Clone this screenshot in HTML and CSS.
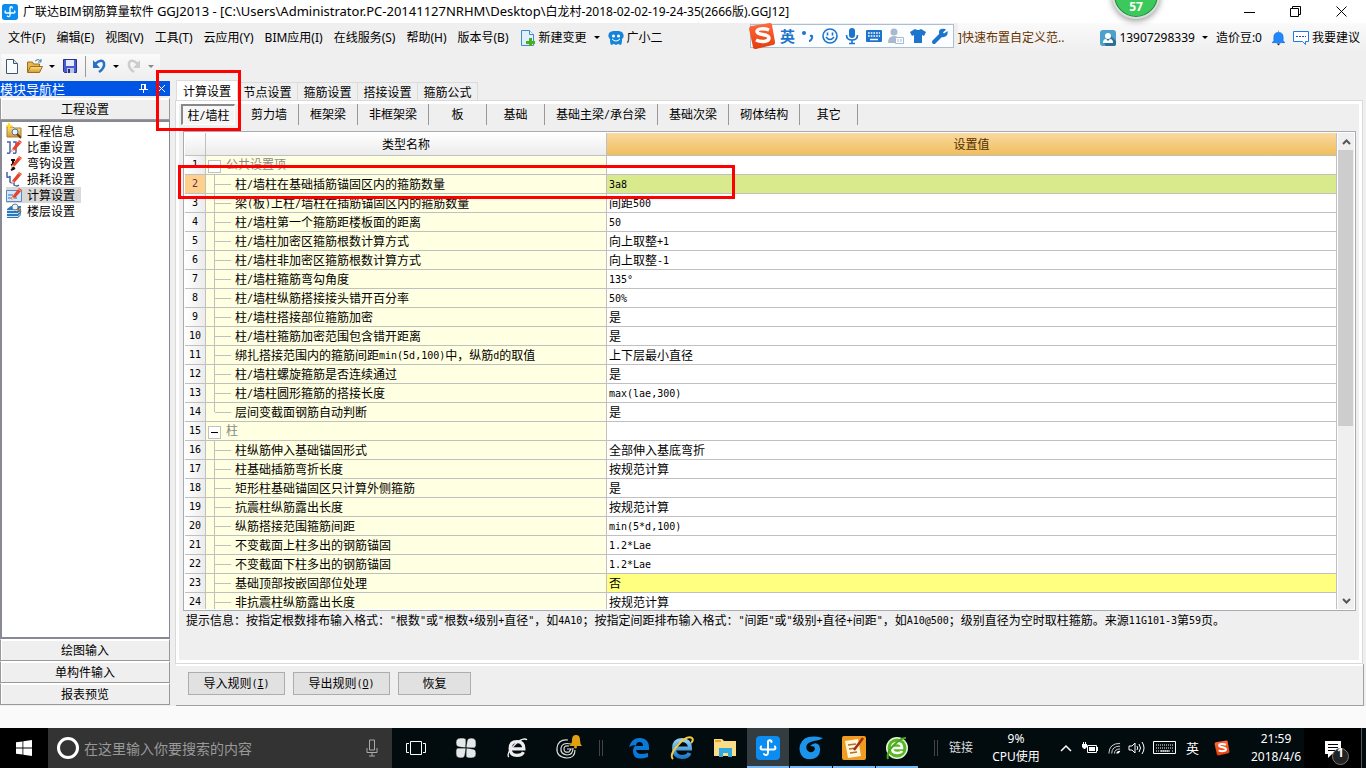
FILE: index.html
```html
<!DOCTYPE html>
<html lang="zh-CN">
<head>
<meta charset="utf-8">
<title>广联达BIM钢筋算量软件 GGJ2013</title>
<link rel="stylesheet" href="styles.css">
</head>
<body>
<svg class="defs" aria-hidden="true">
  <defs>
    <linearGradient id="gold" x1="0" y1="0" x2="0" y2="1"><stop offset="0" stop-color="#fbe08a"/><stop offset="1" stop-color="#d9982a"/></linearGradient>
    <linearGradient id="ora" x1="0" y1="0" x2="0" y2="1"><stop offset="0" stop-color="#ff6a3c"/><stop offset="1" stop-color="#e63c0a"/></linearGradient>
    <linearGradient id="sky" x1="0" y1="0" x2="0" y2="1"><stop offset="0" stop-color="#8fd0f8"/><stop offset="1" stop-color="#1f78c8"/></linearGradient>
    <symbol id="ggj" viewBox="0 0 24 24"><rect width="24" height="24" rx="4" fill="#0a8cf0"/><path d="M15.500 6c0-2.500-3.500-2.500-3.500 0v10.500c0 3-3 3-4 1.500M5 10.500c-1 2.500 0 3 1.500 3h11c1.500 0 2.500-.5 1.500-3" fill="none" stroke="#fff" stroke-width="2" stroke-linecap="round"/></symbol>
    <symbol id="pencil" viewBox="0 0 16 16"><path d="M6 10 13 1l3 2-7 8-4 2z" fill="#e8402a"/><path d="m5 13 1-3 3 1z" fill="#f3cfa0"/><path d="m12 2 3 2" stroke="#ff9a80"/></symbol>
    <symbol id="sogou" viewBox="0 0 28 28"><path d="M3 4 22 1q2 0 2 2l3 17q0 3-2 3L8 27q-3 0-3-2L1 7q0-2 2-3z" fill="url(#ora)"/><path d="M21 8c-5-2-12-1.500-12 1.500 0 4 12 2 12 6.500 0 4-8 4.500-13 2" fill="none" stroke="#fff" stroke-width="3.500"/></symbol>
  </defs>
</svg>

<header class="titlebar">
  <svg class="logo" viewBox="0 0 24 24"><use href="#ggj"/></svg>
  <h1>广联达BIM钢筋算量软件 <span class="path">GGJ2013 - [C:\Users\Administrator.PC-20141127NRHM\Desktop\</span>白龙村-2018-02-02-19-24-35(2666版).GGJ12]</h1>
  <div class="winbtns">
    <button aria-label="最小化"><svg viewBox="0 0 11 11"><path d="M0 6.500h11" stroke="#000"/></svg></button>
    <button aria-label="还原"><svg viewBox="0 0 11 11"><path d="M.5 2.500h8v8h-8zM2.500 2V.5h8v8H9" fill="none" stroke="#000"/></svg></button>
    <button aria-label="关闭"><svg viewBox="0 0 11 11"><path d="m.5.5 10 10m0-10-10 10" stroke="#000"/></svg></button>
  </div>
</header>

<nav class="menubar">
  <div class="menus">
    <button>文件(F)</button><button>编辑(E)</button><button>视图(V)</button><button>工具(T)</button><button>云应用(Y)</button><button>BIM应用(I)</button><button>在线服务(S)</button><button>帮助(H)</button><button>版本号(B)</button>
  </div>
  <button class="iconbtn"><svg class="i16" viewBox="0 0 16 16"><path d="M1.500.5h8l4 4v11h-12z" fill="#dff0fc" stroke="#3c8cc8"/><path d="M9.500.5v4h4" fill="#fff" stroke="#3c8cc8"/><path d="M9 8h3v3h3v3h-3v2H9v-2H6v-3h3z" fill="#48b020"/></svg>新建变更<i class="caret"></i></button>
  <button class="iconbtn mascot"><svg class="i16" viewBox="0 0 16 16"><path d="M2 2l3-1h6l3 1c2 2 2 5 1 6l-1 1c0 2 0 4-1 6l-3-1-2 1-2-1-3 1c-1-2-1-4-1-6L1 8C0 6 0 4 2 2z" fill="#1684d8"/><circle cx="5.500" cy="6" r="1.500" fill="#fff"/><circle cx="10.500" cy="6" r="1.500" fill="#fff"/><path d="M4 9q4 4 8 0" fill="none" stroke="#fff"/></svg>广小二</button>
  <div class="account">
    <a href="#" class="tip">]快速布置自定义范..</a>
    <button class="iconbtn user"><svg class="i16" viewBox="0 0 16 16"><rect width="16" height="16" rx="3" fill="#4ca0cc"/><path d="m10 5 6 6v3q0 2-2 2H6l-2-3z" fill="#2c7098"/><circle cx="8" cy="6" r="3" fill="#fff"/><path d="M3 13q0-4 3-4l2 2 2-2q3 0 3 4z" fill="#fff"/></svg>13907298339<i class="caret"></i></button>
    <span class="beans">造价豆:0</span>
    <svg class="bell" viewBox="0 0 14 16"><path d="M7 0v2M2 11V7q0-5 5-5t5 5v4l2 2H0z" fill="#1e88ff" stroke="#1060c0" stroke-width=".6"/><path d="M5 14h4l-2 2z" fill="#222"/></svg>
    <button class="iconbtn"><svg class="i16" viewBox="0 0 16 16"><path d="M.5 1.500h15v10h-3v3l-3-3h-9z" fill="#fff" stroke="#1e78e8"/><path d="M3 6.500h10" stroke="#1e50a8" stroke-dasharray="2 1"/></svg>我要建议</button>
  </div>
  <div class="ime">
    <svg class="imelogo" viewBox="0 0 28 28"><use href="#sogou"/></svg>
    <b>英</b>
    <svg viewBox="0 0 18 18"><circle cx="5" cy="6" r="2" fill="#1c74cc"/><path d="M11 9q3-1 2 2t-3 3" fill="none" stroke="#1c74cc" stroke-width="2"/></svg>
    <svg viewBox="0 0 18 18"><circle cx="9" cy="9" r="7" fill="none" stroke="#1c74cc" stroke-width="1.600"/><path d="M6.500 5.500v3m5-3v3M5 10q4 5 8 0" fill="none" stroke="#1c74cc" stroke-width="1.600"/></svg>
    <svg viewBox="0 0 18 18"><rect x="6" y="1" width="6" height="10" rx="3" fill="#1c74cc"/><path d="M3.500 8q0 5 5.500 5t5.500-5M9 13v3m-3 .5h6" fill="none" stroke="#1c74cc" stroke-width="1.600"/></svg>
    <svg viewBox="0 0 18 18"><rect x="1" y="3" width="16" height="12" rx="1" fill="#1c74cc"/><path d="M3 6h12M3 9h12" stroke="#fff" stroke-width="1.500" stroke-dasharray="1.700 1"/><path d="M5 12.500h8" stroke="#fff" stroke-width="1.500"/></svg>
    <svg viewBox="0 0 18 18"><circle cx="7" cy="5" r="3.500" fill="#a9b9cf"/><path d="M1 16q0-7 6-7 3 0 4 2v5z" fill="#a9b9cf"/><path d="M8.500 10.500h8v6h-8zM11 12v3m3-3v3" fill="#fff" stroke="#a9b9cf"/></svg>
    <svg viewBox="0 0 18 18"><path d="M6 2q3 2 6 0l5 3-2 4-2-1v8H5V8L3 9 1 5z" fill="#1c74cc"/></svg>
    <svg viewBox="0 0 18 18"><path d="m3 15 7-7" stroke="#1c74cc" stroke-width="4" stroke-linecap="round"/><path d="M15 2.500l-3 3 1 1 3.500-2.500q1 5-3.500 6T8 6t6-4z" fill="#1c74cc"/></svg>
  </div>
  <div class="speed">57</div>
</nav>

<div class="toolbar">
  <div class="tools">
    <button aria-label="新建"><svg class="i16" viewBox="0 0 16 16"><path d="M2.500 1.500h7l4 4v10h-11z" fill="#f8fcff" stroke="#40566e"/><path d="M9.500 1.500v4h4" fill="#cddff0" stroke="#40566e"/></svg></button>
    <button aria-label="打开"><svg class="i16" viewBox="0 0 16 16"><path d="M.5 14V4h5l1 2h6v8z" fill="#e8b84c" stroke="#9a7020"/><path d="m.5 14.500 3-6h12l-3 6z" fill="url(#gold)" stroke="#9a7020"/><path d="M8 3q3-3 6 0m0-2v3h-3" fill="none" stroke="#4878a8"/></svg><i class="caret"></i></button>
    <button aria-label="保存"><svg class="i16" viewBox="0 0 16 16"><path d="M1.500 1.500h13v13h-12l-1-1z" fill="#4a5cd0" stroke="#28348c"/><path d="M4 2h8v6H4z" fill="#e4ecff"/><path d="M5 10h7v5H5z" fill="#b8c4e8"/><path d="M6 11h2v4H6z" fill="#283060"/></svg></button>
    <button class="undo" aria-label="撤销"><svg class="i16" viewBox="0 0 16 16"><path d="M4 6Q11 0 13 5q1 5-5 9" fill="none" stroke="#2870c8" stroke-width="2.500"/><path d="M2 2v8h7z" fill="#2870c8"/></svg><i class="caret"></i></button>
    <button aria-label="重做" disabled><svg class="i16" viewBox="0 0 16 16"><path d="M12 6Q5 0 3 5q-1 5 5 9" fill="none" stroke="#ccc" stroke-width="2.500"/><path d="M14 2v8H7z" fill="#ccc"/></svg><i class="caret off"></i></button>
  </div>
</div>

<div class="workspace">
  <aside class="sidebar">
    <div class="sidehead"><h2>模块导航栏</h2>
      <button aria-label="固定"><svg viewBox="0 0 9 9"><path d="M2.500 0v5M6.500 0v5M2 .5h5M0 5.500h9M4.500 6v3M5.500 0v5" stroke="#fff"/></svg></button>
      <button aria-label="关闭"><svg viewBox="0 0 9 9"><path d="m1 1 7 7m0-7-7 7" stroke="#fff"/></svg></button>
    </div>
    <button class="cat">工程设置</button>
    <ul class="list">
      <li><svg class="i16" viewBox="0 0 16 16"><path d="M1 4h6l1 1h7v9H1z" fill="url(#gold)" stroke="#a08040"/><path d="M3 0v6M0 3h6" stroke="#ffdc30" stroke-width="2"/><circle cx="9" cy="9" r="3" fill="#e6f4ff" stroke="#5070a0"/><path d="m11 11 4 4" stroke="#604020" stroke-width="2"/></svg>工程信息</li>
      <li><svg class="i16" viewBox="0 0 16 16"><path d="M1 3h3v10q0 2-3 1M7 3h3v10q0 2-3 1" fill="none" stroke="#4464a8" stroke-width="1.500"/><use href="#pencil"/></svg>比重设置</li>
      <li><svg class="i16" viewBox="0 0 16 16"><path d="M5 5h4M7 5v10M5 10l4-1M5 15l4-2" stroke="#111" stroke-width="2"/><use href="#pencil"/></svg>弯钩设置</li>
      <li><svg class="i16" viewBox="0 0 16 16"><path d="M1 1v5q2 1 3-1v6q2 2 4-1v4q3 2 5 0" fill="none" stroke="#4464a8" stroke-width="1.500"/><use href="#pencil"/></svg>损耗设置</li>
      <li class="on"><svg class="i16" viewBox="0 0 16 16"><path d="M.5 3.500h15v11H.5z" fill="#d4e6fa" stroke="#5888c0"/><path d="M2 8h5M2 11h9" stroke="#4070b0"/><use href="#pencil"/></svg>计算设置</li>
      <li><svg class="i16" viewBox="0 0 16 16"><path d="m1 6 4-3h10v9l-3 3H1z" fill="#2c78b8"/><path d="M1 7.500h11l3-3M1 10.500h11l3-3M1 13.500h11l3-3" fill="none" stroke="#c8e8ff"/><circle cx="9" cy="4" r="3" fill="#e6f4ff" stroke="#708090"/><path d="m11 6 4 3" stroke="#b07030" stroke-width="2"/></svg>楼层设置</li>
    </ul>
    <button class="cat">绘图输入</button>
    <button class="cat">单构件输入</button>
    <button class="cat">报表预览</button>
    <div class="mark mark-tab"></div>
  </aside>

  <main class="main">
    <div class="tabs">
      <button class="on">计算设置</button><button>节点设置</button><button>箍筋设置</button><button>搭接设置</button><button>箍筋公式</button>
    </div>
    <section class="panel">
      <div class="subtabs">
        <button class="on">柱<span class="m">/</span>墙柱</button><button>剪力墙</button><button>框架梁</button><button>非框架梁</button><button>板</button><button>基础</button><button>基础主梁<span class="m">/</span>承台梁</button><button>基础次梁</button><button>砌体结构</button><button>其它</button>
      </div>
      <div class="gridbox">
        <div class="gridview">
          <table class="grid">
            <colgroup><col class="c-no"><col class="c-name"><col></colgroup>
            <thead><tr><th></th><th>类型名称</th><th class="cur">设置值</th></tr></thead>
            <tbody>
              <tr class="group"><th>1</th><td><i class="box"></i>公共设置项</td><td></td></tr>
              <tr class="sel"><th>2</th><td>柱<span class="m">/</span>墙柱在基础插筋锚固区内的箍筋数量</td><td><span class="m">3a8</span></td></tr>
              <tr><th>3</th><td>梁<span class="m">(</span>板<span class="m">)</span>上柱<span class="m">/</span>墙柱在插筋锚固区内的箍筋数量</td><td>间距<span class="m">500</span></td></tr>
              <tr><th>4</th><td>柱<span class="m">/</span>墙柱第一个箍筋距楼板面的距离</td><td><span class="m">50</span></td></tr>
              <tr><th>5</th><td>柱<span class="m">/</span>墙柱加密区箍筋根数计算方式</td><td>向上取整<span class="m">+1</span></td></tr>
              <tr><th>6</th><td>柱<span class="m">/</span>墙柱非加密区箍筋根数计算方式</td><td>向上取整<span class="m">-1</span></td></tr>
              <tr><th>7</th><td>柱<span class="m">/</span>墙柱箍筋弯勾角度</td><td><span class="m">135°</span></td></tr>
              <tr><th>8</th><td>柱<span class="m">/</span>墙柱纵筋搭接接头错开百分率</td><td><span class="m">50%</span></td></tr>
              <tr><th>9</th><td>柱<span class="m">/</span>墙柱搭接部位箍筋加密</td><td>是</td></tr>
              <tr><th>10</th><td>柱<span class="m">/</span>墙柱箍筋加密范围包含错开距离</td><td>是</td></tr>
              <tr><th>11</th><td>绑扎搭接范围内的箍筋间距<span class="m">min(5d,100)</span>中，纵筋<span class="m">d</span>的取值</td><td>上下层最小直径</td></tr>
              <tr><th>12</th><td>柱<span class="m">/</span>墙柱螺旋箍筋是否连续通过</td><td>是</td></tr>
              <tr><th>13</th><td>柱<span class="m">/</span>墙柱圆形箍筋的搭接长度</td><td><span class="m">max(lae,300)</span></td></tr>
              <tr class="last"><th>14</th><td>层间变截面钢筋自动判断</td><td>是</td></tr>
              <tr class="group"><th>15</th><td><i class="box minus"></i>柱</td><td></td></tr>
              <tr><th>16</th><td>柱纵筋伸入基础锚固形式</td><td>全部伸入基底弯折</td></tr>
              <tr><th>17</th><td>柱基础插筋弯折长度</td><td>按规范计算</td></tr>
              <tr><th>18</th><td>矩形柱基础锚固区只计算外侧箍筋</td><td>是</td></tr>
              <tr><th>19</th><td>抗震柱纵筋露出长度</td><td>按规范计算</td></tr>
              <tr><th>20</th><td>纵筋搭接范围箍筋间距</td><td><span class="m">min(5*d,100)</span></td></tr>
              <tr><th>21</th><td>不变截面上柱多出的钢筋锚固</td><td><span class="m">1.2*Lae</span></td></tr>
              <tr><th>22</th><td>不变截面下柱多出的钢筋锚固</td><td><span class="m">1.2*Lae</span></td></tr>
              <tr class="changed"><th>23</th><td>基础顶部按嵌固部位处理</td><td>否</td></tr>
              <tr><th>24</th><td>非抗震柱纵筋露出长度</td><td>按规范计算</td></tr>
            </tbody>
          </table>
        </div>
        <div class="scroll">
          <button aria-label="向上滚动"><svg viewBox="0 0 9 6"><path d="m1 5 3.500-3.500L8 5" fill="none" stroke="#555" stroke-width="2"/></svg></button>
          <div class="thumb"></div>
          <button aria-label="向下滚动"><svg viewBox="0 0 9 6"><path d="m1 1 3.500 3.500L8 1" fill="none" stroke="#555" stroke-width="2"/></svg></button>
        </div>
        <div class="mark mark-row"></div>
      </div>
      <p class="hint">提示信息：按指定根数排布输入格式：<span class="m">"</span>根数<span class="m">"</span>或<span class="m">"</span>根数<span class="m">+</span>级别<span class="m">+</span>直径<span class="m">"</span>，如<span class="m">4A10</span>；按指定间距排布输入格式：<span class="m">"</span>间距<span class="m">"</span>或<span class="m">"</span>级别<span class="m">+</span>直径<span class="m">+</span>间距<span class="m">"</span>，如<span class="m">A10@500</span>；级别直径为空时取柱箍筋。来源<span class="m">11G101-3</span>第<span class="m">59</span>页。</p>
    </section>
    <div class="actions">
      <button>导入规则<span class="m">(<u>I</u>)</span></button><button>导出规则<span class="m">(<u>O</u>)</span></button><button class="short">恢复</button>
    </div>
  </main>
</div>

<footer class="taskbar">
  <button class="start" aria-label="开始"><svg viewBox="0 0 16 16"><path d="M0 2.300 6.500 1.400v6.100H0zM7.300 1.300 16 0v7.500H7.300zM0 8.400h6.500v6.200L0 13.700zM7.300 8.400H16V16l-8.700-1.300z" fill="#fff"/></svg></button>
  <label class="search">
    <i class="ring"></i>
    <input type="text" placeholder="在这里输入你要搜索的内容" aria-label="搜索">
    <svg class="mic" viewBox="0 0 12 18"><path d="M3.500 1h5v10h-5zM1 9v4.500h10V9M6 13.500V17M3 17h6" fill="none" stroke="#aaa"/></svg>
  </label>
  <button class="tv" aria-label="任务视图"><svg viewBox="0 0 20 16"><path d="M4.500 1.500h11v13h-11zM3 3.500H.5v9H3M17 3.500h2.500v9H17" fill="none" stroke="#fff"/></svg></button>
  <button class="app wide" aria-label="应用中心"><svg viewBox="0 0 24 24"><g fill="#e4e8e8" stroke="#020b0e" stroke-width=".8"><path d="M12 12V3q0-2-3-2H6Q1 1 1 6t4 5q4 1 7 1z"/><path d="M12 12h9q2 0 2-3V6q0-5-5-5t-5 4q-1 4-1 7z"/><path d="M12 12v9q0 2 3 2h3q5 0 5-5t-4-5q-4-1-7-1z"/><path d="M12 12H3q-2 0-2 3v3q0 5 5 5t5-4q1-4 1-7z"/></g></svg></button>
  <button class="app wide" aria-label="浏览器"><svg viewBox="0 0 24 24"><path d="M6 13h13.500q0-8-7.500-8t-7.500 7.500T12 20q5.500 0 7-3.500" fill="none" stroke="#eee" stroke-width="3.500"/><path d="M3 22Q0 18 9 9T23 3" fill="none" stroke="#eee" stroke-width="1.500"/></svg></button>
  <button class="app wide" aria-label="广联达消息"><svg viewBox="0 0 28 28"><path d="M14 6Q4 5 3 14t10 10q8 0 8-8M17 10q-9-2-10 4t6 7q6 0 6-7M15 12q-5-1-5 3t5 3l2-3h-4" fill="none" stroke="#ddd" stroke-width="1.200"/><path d="M15 12q3-2 3-6 0-5 4-5t4 5q0 4 2 6z" fill="#e0a010"/><circle cx="21.500" cy="13" r="1.500" fill="#e0a010"/></svg></button>
  <i class="sep"></i>
  <div class="apps">
    <button class="app" aria-label="Edge"><svg viewBox="0 0 24 24"><path d="M2 11Q5 1 14 2q9 1 8 12H9q1 6 12 3v4Q6 26 6 15q0-4 3-6-4 0-7 2zm7-1h7q0-4-3.500-4T9 10z" fill="#0a78d8"/></svg></button>
    <button class="app" aria-label="Internet Explorer"><svg viewBox="0 0 24 24"><path d="M6 12.500h14q0-8.500-8-8.500t-8 8.500T12 21q6 0 7.500-4" fill="none" stroke="url(#sky)" stroke-width="4"/><path d="M3 23Q-1 19 8 9T22 2q2 2-1 5" fill="none" stroke="#f8cc38" stroke-width="2"/></svg></button>
    <button class="app" aria-label="文件资源管理器"><svg viewBox="0 0 24 24"><path d="M1 3h8l2 2h12v15H1z" fill="#f8dc88"/><path d="M2 4h6v2H2z" fill="#e8a820"/><path d="M6 12h13v9h-4v-4h-5v4H6z" fill="#30a8e0"/></svg></button>
    <button class="app open active" aria-label="GGJ2013"><svg viewBox="0 0 24 24"><use href="#ggj"/></svg></button>
    <button class="app open" aria-label="广联达"><svg viewBox="0 0 24 24"><path d="M24 2Q5-3 1 9q-2 8 4 13 7 3 13-1 5-5 2-12-4-4-9 1 7 0 4 5-4 3-7-1-3-7 7-9 5 0 9-3z" fill="#1c94ec"/></svg></button>
    <button class="app open" aria-label="记事"><svg viewBox="0 0 24 24"><rect width="24" height="24" rx="2" fill="#f09c20"/><path d="m3 5 13-2 3 17-13 2z" fill="#fff6dc"/><path d="m6 9 8-1m-7 5 7-1m-6 5 7-1" stroke="#b07030" stroke-width="1.500"/><path d="m12 14 9-12" stroke="#a03010" stroke-width="2.500"/></svg></button>
    <button class="app open" aria-label="360浏览器"><svg viewBox="0 0 24 24"><circle cx="12" cy="12" r="11" fill="#e8f8e0"/><circle cx="12" cy="12" r="9.500" fill="#58b828"/><path d="M7 12h10q0-5-5-5t-5 5 5 5q4 0 5-2" fill="none" stroke="#fff" stroke-width="2.500"/><path d="M3 23Q1 17 9 9t12-7" fill="none" stroke="#48a818" stroke-width="2"/></svg></button>
  </div>
  <i class="sep right"></i>
  <span class="links">链接</span>
  <div class="twolines cpu"><span>9%</span><span>CPU使用</span></div>
  <div class="tray">
    <svg class="t-up" viewBox="0 0 12 8"><path d="m1 7 5-5 5 5" fill="none" stroke="#fff" stroke-width="1.500"/></svg>
    <svg class="t-bat" viewBox="0 0 16 12"><path d="M5.500 3.500h9v7h-9z" fill="none" stroke="#fff"/><path d="M7 5h6v4H7zM15 5h1v4h-1zM0 2h5v3L3 7H2L0 5zM1 0h1v2H1zM3 0h1v2H3z" fill="#fff"/></svg>
    <svg class="t-wifi" viewBox="0 0 14 14"><path d="M1 13Q1 2 13 2M4 13q0-8 9-8M7 13q0-5 6-5" fill="none" stroke="#ddd"/><path d="M9 13q0-3 4-3v1l-2 2z" fill="#fff"/></svg>
    <svg class="t-vol" viewBox="0 0 17 14"><path d="M1 5h3l3-3v10L4 9H1zM9 5q1.500 2 0 4M11 3q3 4 0 8M14 1q4 6 0 12" fill="none" stroke="#fff"/></svg>
    <svg class="t-kb" viewBox="0 0 24 14"><path d="M.5.500h22v12H.500z" fill="none" stroke="#fff"/><path d="M3 4h18M3 7h18M3 10h3m2 0h9m2 0h2" stroke="#fff" stroke-dasharray="1 1"/><path d="M7 10h9" stroke="#fff"/></svg>
    <span class="lang">英</span>
    <svg class="t-s" viewBox="0 0 28 28"><use href="#sogou"/></svg>
  </div>
  <div class="twolines clock"><span>21:59</span><span>2018/4/6</span></div>
  <button class="notes" aria-label="通知"><svg viewBox="0 0 24 24"><path d="M0 0h16v13H7l-4 4v-4H0z" fill="#fff"/><path d="M3 3.500h10M3 6.500h10M3 9.500h7" stroke="#000"/><circle cx="15.500" cy="15.500" r="8" fill="#222" stroke="#777"/></svg><span>1</span></button>
</footer>
</body>
</html>
```
FILE: styles.css
```css
* { box-sizing: border-box; }
body {
  margin: 0;
  height: 100vh;
  display: flex;
  flex-direction: column;
  overflow: hidden;
  background: #fafafa;
  color: #000;
  font: 12px/16px "Noto Sans", "Noto Sans CJK SC", sans-serif;
}
button {
  padding: 0;
  border: 0;
  background: none;
  font: inherit;
  color: inherit;
  white-space: nowrap;
}
svg { display: block; flex: none; }
.defs { position: absolute; width: 0; height: 0; }
.i16 { width: 16px; height: 16px; }
.m { font: 10px/12px "DejaVu Sans Mono", monospace; vertical-align: 1px; }
.caret {
  border: 3px solid transparent;
  border-top-color: #000;
  border-bottom: 0;
}
.caret.off { border-top-color: #888; }

.titlebar {
  display: flex;
  align-items: center;
  height: 23px;
  padding: 0 2px;
  background: #fff;
}
.logo { width: 16px; height: 16px; }
h1, h2 { margin: 0; font: inherit; white-space: nowrap; }
h1 { flex: 1; margin-left: 5px; }
.path { font-size: 13px; }
.winbtns { display: flex; }
.winbtns button { display: flex; justify-content: center; width: 46px; }
.winbtns svg { width: 11px; height: 11px; }

.menubar {
  position: relative;
  display: flex;
  align-items: center;
  height: 29px;
  padding-left: 8px;
  background: #efefef;
}
.menus { display: flex; gap: 11px; margin-right: 3px; }
.iconbtn { display: flex; align-items: center; gap: 3px; margin-left: 8px; }
.iconbtn .caret { margin-left: 4px; }
.account {
  display: flex;
  align-items: center;
  align-self: stretch;
  margin-left: auto;
  padding-right: 6px;
  background: linear-gradient(#fafafa, #efefef);
}
.tip { color: #630; text-decoration: none; }
.user { margin-left: 36px; }
.beans { margin-left: 8px; }
.bell { width: 13px; height: 16px; margin-left: 10px; }
.ime {
  position: absolute;
  right: 412px;
  top: 1px;
  display: flex;
  align-items: center;
  gap: 4px;
  width: 204px;
  height: 24px;
  border: 1px solid #a9bfd6;
  background: #fbfdff;
}
.ime svg { width: 18px; height: 18px; }
.ime .imelogo { width: 28px; height: 28px; margin-left: -3px; }
.ime b { color: #1c74cc; font-size: 15px; }
.speed {
  position: absolute;
  right: 206px;
  top: -52px;
  width: 48px;
  height: 48px;
  padding-top: 26px;
  border: 2px solid #ddd;
  border-radius: 50%;
  background: #3cc85a;
  box-shadow: inset 0 0 0 1px #1c8a48, 0 2px 6px #0006;
  color: #fff;
  font: bold 12px/16px "Noto Sans", sans-serif;
  text-align: center;
}

.toolbar { height: 28px; background: #efefef; padding: 2px 0 0 1px; }
.tools {
  display: flex;
  align-items: center;
  gap: 7px;
  width: 159px;
  height: 24px;
  padding-left: 3px;
  background: linear-gradient(#fafafa, #efefef);
}
.tools button { display: flex; align-items: center; gap: 6px; }
.tools .undo { padding-left: 5px; border-left: 1px solid #999; height: 21px; }

.workspace { flex: 1; min-height: 0; display: flex; gap: 5px; background: #efefef; }
.workspace, .cat, .tabs, .subtabs, .grid, .hint, .actions button {
  font-family: "Noto Sans CJK SC", sans-serif;
}
.sidebar {
  position: relative;
  display: flex;
  flex-direction: column;
  width: 170px;
  padding: 1px 0;
}
.sidehead {
  display: flex;
  align-items: center;
  height: 15px;
  margin-bottom: 2px;
  background: #0055e5;
  color: #fff;
}
.sidehead h2 { flex: 1; font-size: 13px; line-height: 15px; }
.sidehead button { margin-right: 4px; margin-left: 5px; }
.sidehead svg { width: 9px; height: 9px; }
.cat {
  height: 22px;
  border: 1px solid #999;
  border-top-color: #fff;
  box-shadow: inset 1px 1px #fff;
  background: #efefef;
}
.list {
  flex: 1;
  margin: 0;
  padding: 1px 4px;
  list-style: none;
  background: #fff;
  border: 2px solid #878a94;
  border-right-width: 1px;
}
.list li { display: flex; align-items: center; gap: 5px; width: 75px; height: 16px; }
.list .on { background: #d9d9d9; }

.main { flex: 1; min-width: 0; display: flex; flex-direction: column; padding-right: 2px; }
.tabs { display: flex; align-items: flex-end; height: 20px; padding-left: 1px; }
.tabs button {
  width: 60px;
  height: 18px;
  border: 1px solid #dcdcdc;
  border-width: 1px 1px 0 0;
}
.tabs .on { width: 62px; height: 20px; background: #fff; border-left-width: 1px; }
.panel {
  flex: 1;
  min-height: 0;
  display: flex;
  flex-direction: column;
  margin-right: 1px;
  border: 1px solid #d9d9d9;
  border-width: 1px 2px;
  outline: 3px solid #fff;
  outline-offset: -4px;
  padding: 3px 3px 0 4px;
}
.subtabs { display: flex; height: 21px; margin-bottom: 6px; }
.subtabs button { min-width: 58px; padding: 0 11px 2px; border-right: 1px solid #999; }
.subtabs .on {
  width: 54px;
  min-width: 0;
  margin-right: 5px;
  padding: 0;
  border: 2px solid #888;
  border-right: 1px solid #fff;
  border-bottom: 1px solid #fff;
  background: #f6f6f6;
}
.gridbox {
  position: relative;
  flex: 1;
  min-height: 0;
  display: flex;
  margin: 0 2px;
  border: 1px solid #a9abb3;
  padding: 1px;
  background: #fff;
}
.gridview { flex: 1; overflow: hidden; }
.grid { width: 100%; table-layout: fixed; border-collapse: separate; border-spacing: 0; line-height: 14px; }
.c-no { width: 21px; }
.c-name { width: 401px; }
.grid th, .grid td {
  height: 19px;
  padding: 1px 0 1px 2px;
  border-right: 1px solid #c0c0c0;
  border-bottom: 1px solid #c0c0c0;
  font-weight: normal;
  white-space: nowrap;
}
.grid thead th { height: 23px; padding: 0; background: linear-gradient(#fff, #ececec); }
.grid thead .cur { background: linear-gradient(#fad8a0, #f0bf5c); color: #503000; }
.grid tbody th {
  padding: 0;
  background: linear-gradient(90deg, #fff, #ececec);
  font: 10px/16px "DejaVu Sans Mono", monospace;
}
.grid td:nth-child(2) {
  padding-left: 29px;
  background:
    linear-gradient(#c0c0c0, #c0c0c0) 8px 0 / 1px 100% no-repeat,
    linear-gradient(#c0c0c0, #c0c0c0) 9px 9px / 16px 1px no-repeat,
    #ffffe1;
}
.grid .last td:nth-child(2) {
  background:
    linear-gradient(#c0c0c0, #c0c0c0) 8px 0 / 1px 9px no-repeat,
    linear-gradient(#c0c0c0, #c0c0c0) 9px 9px / 16px 1px no-repeat,
    #ffffe1;
}
.grid .group td:nth-child(2) { padding-left: 2px; background: #ffffe1; color: #888; }
.box {
  display: inline-block;
  width: 13px;
  height: 13px;
  margin-right: 5px;
  border: 1px solid #c0c0c0;
  background: #fff;
  vertical-align: middle;
}
.box.minus { background: linear-gradient(#000, #000) center / 7px 1px no-repeat #fff; }
.grid .sel th { background: #ffd08c; color: #603060; }
.grid .sel td:last-child { background: #d9ea8c; }
.grid .changed td:last-child { background: #ffff80; }
.scroll {
  display: flex;
  flex-direction: column;
  width: 16px;
  margin-left: 1px;
  background: #efefef;
}
.scroll button { display: flex; align-items: center; justify-content: center; height: 17px; }
.scroll svg { width: 9px; height: 6px; }
.thumb { height: 276px; margin-bottom: auto; margin-right: 1px; background: #cdcdcd; }
.hint { height: 52px; margin: 0; padding: 1px 5px; line-height: 16px; white-space: nowrap; overflow: hidden; }
.actions {
  display: flex;
  align-items: center;
  gap: 8px;
  height: 42px;
  margin-left: 1px;
  padding: 0 12px 3px;
  border: 1px solid #a0a0a0;
  border-width: 0 1px 1px 0;
  box-shadow: inset 0 2px #fff;
}
.actions button { width: 97px; height: 23px; background: #e1e1e1; border: 1px solid #adadad; }
.actions .short { width: 73px; }
.mark { position: absolute; border: 3px solid #f00; pointer-events: none; z-index: 2; }
.mark-tab { left: 156px; top: -10px; width: 85px; height: 61px; }
.mark-row { left: -6px; top: 33px; width: 557px; height: 34px; }

.taskbar {
  display: flex;
  align-items: center;
  height: 40px;
  margin-top: 22px;
  background: #020b0e;
  color: #fff;
}
.start { display: flex; align-items: center; justify-content: center; width: 48px; height: 40px; background: #000; }
.start svg { width: 16px; height: 16px; }
.search { display: flex; align-items: center; width: 344px; height: 40px; padding: 0 14px 0 9px; background: #333; }
.ring { width: 22px; height: 22px; border: 3px solid #fff; border-radius: 50%; }
.search input {
  flex: 1;
  min-width: 0;
  margin-left: 5px;
  border: 0;
  padding: 0;
  background: none;
  color: #fff;
  font: 14px/20px "Noto Sans CJK SC", sans-serif;
}
.search input::placeholder { color: #999; opacity: 1; }
.mic { width: 12px; height: 18px; }
.tv { display: flex; justify-content: center; width: 48px; }
.tv svg { width: 20px; height: 16px; }
.app { display: flex; align-items: center; justify-content: center; width: 42px; height: 40px; }
.app svg { width: 24px; height: 24px; }
.app.wide { width: 51px; }
.app.wide svg { width: 22px; height: 22px; }
.app.wide:nth-of-type(5) svg { width: 28px; height: 28px; }
.apps { display: flex; gap: 1px; margin-left: 15px; }
.app.open { box-shadow: inset 0 -2px #76b9f5; }
.app.active { background: #333c40; }
.sep { width: 4px; height: 16px; margin-left: 6px; border: 1px solid #444; border-width: 0 1px; }
.sep.right { margin-left: auto; margin-right: 11px; }
.links { width: 24px; color: #ddd; }
.twolines { display: flex; flex-direction: column; align-items: center; line-height: 18px; }
.cpu { width: 60px; margin-left: 13px; }
.tray { display: flex; align-items: center; margin-left: 14px; }
.t-up { width: 12px; height: 8px; margin-right: 10px; }
.t-bat { width: 16px; height: 12px; margin-right: 10px; }
.t-wifi { width: 13px; height: 14px; margin-right: 7px; }
.t-vol { width: 17px; height: 14px; margin-right: 8px; }
.t-kb { width: 24px; height: 14px; }
.lang { margin: 0 7px 0 9px; font-size: 13px; }
.t-s { width: 16px; height: 16px; margin-left: 8px; }
.clock { width: 56px; margin-left: 18px; }
.notes { position: relative; width: 58px; height: 40px; padding: 10px 0 0 21px; border-right: 1px solid #555; margin-right: 4px; background: #000; }
.notes svg { width: 24px; height: 24px; }
.notes span { position: absolute; left: 33px; top: 17px; font-weight: bold; }
```
